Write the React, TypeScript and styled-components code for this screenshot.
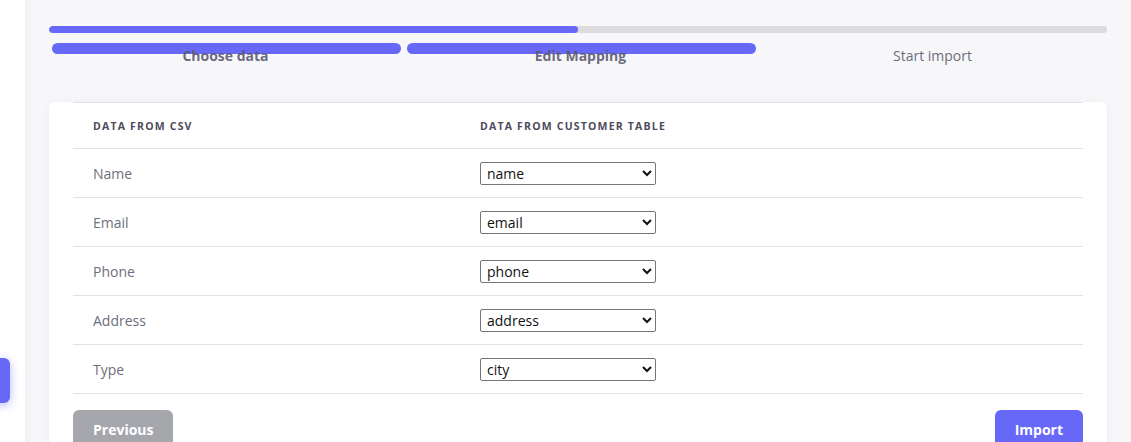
import React, {useState} from 'react';
import {createGlobalStyle, styled} from 'styled-components';

const accent = '#6767f8';

const GlobalStyle = createGlobalStyle`
    html, body {
        margin: 0;
        padding: 0;
        background: #f7f7fa;
        font-family: "Open Sans", "Noto Sans", sans-serif;
        overflow: hidden;
    }
`;

const steps = [
    {label: 'Choose data', done: true},
    {label: 'Edit Mapping', done: true},
    {label: 'Start import', done: false},
];

const initialRows = [
    {label: 'Name', value: 'name'},
    {label: 'Email', value: 'email'},
    {label: 'Phone', value: 'phone'},
    {label: 'Address', value: 'address'},
    {label: 'Type', value: 'city'},
];

const fields = ['name', 'email', 'phone', 'address', 'city'];

const App = () => {
    const [rows, setRows] = useState(initialRows);

    const onChange = (index: number, value: string) => {
        setRows(rows.map((row, i) => (i === index ? {...row, value} : row)));
    };

    return (
        <Layout>
            <GlobalStyle/>
            <Sidebar>
                <SideTab/>
            </Sidebar>
            <Main>
                <ProgressBar>
                    <ProgressFill style={{width: '50%'}}/>
                </ProgressBar>
                <Steps>
                    {steps.map(step => (
                        <Step key={step.label}>
                            {step.done && <StepPill/>}
                            <StepLabel $done={step.done}>{step.label}</StepLabel>
                        </Step>
                    ))}
                </Steps>
                <Card>
                    <Table>
                        <HeadRow>
                            <HeadCell>Data from CSV</HeadCell>
                            <HeadCell>Data from customer table</HeadCell>
                        </HeadRow>
                        {rows.map((row, i) => (
                            <Row key={row.label}>
                                <Cell>{row.label}</Cell>
                                <Cell>
                                    <FieldSelect value={row.value} onChange={e => onChange(i, e.target.value)}>
                                        {fields.map(f => <option key={f} value={f}>{f}</option>)}
                                    </FieldSelect>
                                </Cell>
                            </Row>
                        ))}
                    </Table>
                    <Actions>
                        <Button $variant="secondary">Previous</Button>
                        <Button $variant="primary">Import</Button>
                    </Actions>
                </Card>
            </Main>
        </Layout>
    );
};

const Layout = styled.div`
    display: flex;
    min-height: 100vh;
`;

const Sidebar = styled.aside`
    position: relative;
    flex-shrink: 0;
    width: 25px;
    background: #fff;
    box-shadow: 2px 0 10px rgba(30, 30, 60, 0.05);
    z-index: 1;
`;

const SideTab = styled.div`
    position: absolute;
    top: 358px;
    left: -10px;
    width: 20px;
    height: 45px;
    border-radius: 6px;
    background: ${accent};
    box-shadow: 0 2px 10px rgba(103, 103, 248, 0.45);
`;

const Main = styled.main`
    flex: 1;
    min-width: 0;
    padding: 26px 24px 0;
`;

const ProgressBar = styled.div`
    height: 7px;
    border-radius: 4px;
    background: #dcdcde;
    overflow: hidden;
`;

const ProgressFill = styled.div`
    height: 100%;
    border-radius: 4px;
    background: ${accent};
`;

const Steps = styled.div`
    display: grid;
    grid-template-columns: repeat(3, 349px);
    gap: 6px;
    margin: 10px 0 0 3px;
    height: 26px;
`;

const Step = styled.div`
    display: grid;
    justify-items: center;
    align-items: start;
`;

const StepPill = styled.div`
    grid-area: 1 / 1;
    justify-self: stretch;
    height: 11px;
    border-radius: 6px;
    background: ${accent};
`;

const StepLabel = styled.span<{ $done: boolean }>`
    grid-area: 1 / 1;
    position: relative;
    padding-top: 3px;
    font-size: 14px;
    line-height: 20px;
    font-weight: ${p => (p.$done ? 700 : 400)};
    color: ${p => (p.$done ? 'rgba(90, 88, 110, 0.9)' : '#6e6e7c')};
    transform: translateX(${p => (p.$done ? '-1px' : '-4px')});
`;

const Card = styled.section`
    margin-top: 33px;
    padding: 0 24px 24px;
    background: #fff;
    border-radius: 6px;
    box-shadow: 0 1px 10px rgba(30, 30, 60, 0.05);
`;

const Table = styled.div`
    border-top: 1px solid #e2e2e6;
`;

const HeadRow = styled.div`
    display: grid;
    grid-template-columns: 387px 1fr;
    height: 45px;
    align-items: center;
    border-bottom: 1px solid #e2e2e6;
`;

const HeadCell = styled.div`
    padding-left: 20px;
    font-size: 10.5px;
    font-weight: 700;
    letter-spacing: 1.2px;
    text-transform: uppercase;
    color: #4d4c5c;
`;

const Row = styled.div`
    display: grid;
    grid-template-columns: 387px 1fr;
    height: 48px;
    align-items: center;
    border-bottom: 1px solid #e2e2e6;
`;

const Cell = styled.div`
    padding-left: 20px;
    font-size: 14px;
    color: #6f6f7b;
    display: flex;
    align-items: center;
`;

const FieldSelect = styled.select`
    width: 176px;
    height: 23px;
    font-family: "Open Sans", "Noto Sans", sans-serif;
    font-size: 14px;
    color: #111;
    background: #fff;
    border: 1px solid #767676;
    border-radius: 2px;
    padding: 0 2px;
`;

const Actions = styled.div`
    display: flex;
    justify-content: space-between;
    margin-top: 16px;
`;

const Button = styled.button<{ $variant: 'primary' | 'secondary' }>`
    height: 38px;
    padding: 0 20px;
    border: none;
    border-radius: 6px;
    font-family: "Open Sans", "Noto Sans", sans-serif;
    font-size: 14px;
    font-weight: 700;
    color: #fff;
    background: ${p => (p.$variant === 'primary' ? accent : '#a6a6ad')};
    cursor: pointer;
`;

export default App;
